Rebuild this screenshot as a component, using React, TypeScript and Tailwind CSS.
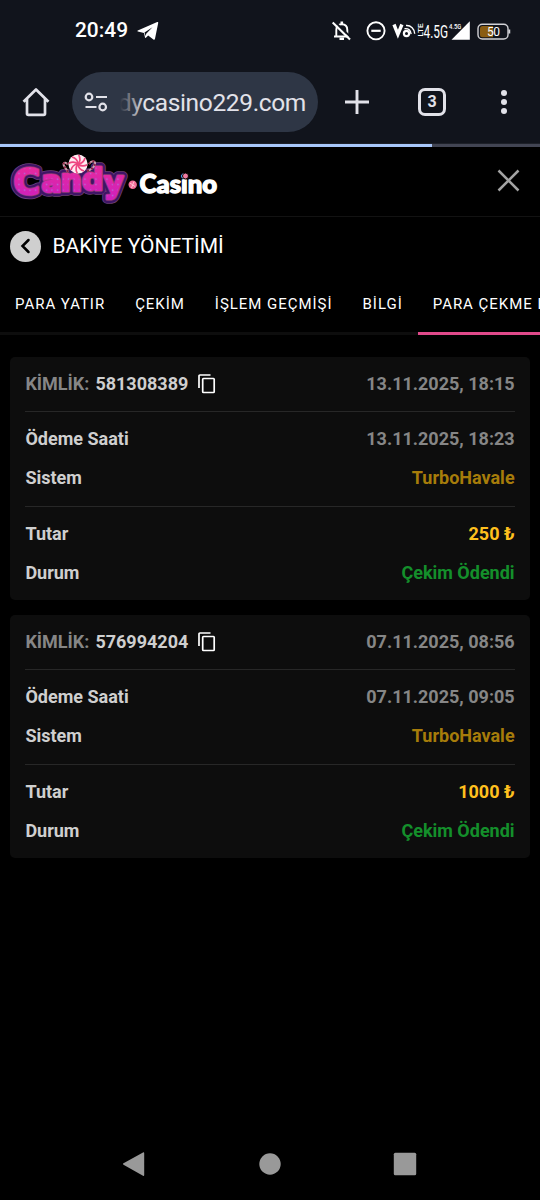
import React from "react";

type Payment = {
  id: string;
  created: string;
  paidAt: string;
  system: string;
  amount: string;
  status: string;
};

const payments: Payment[] = [
  {
    id: "581308389",
    created: "13.11.2025, 18:15",
    paidAt: "13.11.2025, 18:23",
    system: "TurboHavale",
    amount: "250 ₺",
    status: "Çekim Ödendi",
  },
  {
    id: "576994204",
    created: "07.11.2025, 08:56",
    paidAt: "07.11.2025, 09:05",
    system: "TurboHavale",
    amount: "1000 ₺",
    status: "Çekim Ödendi",
  },
];

const tabs = ["PARA YATIR", "ÇEKİM", "İŞLEM GEÇMİŞİ", "BİLGİ", "PARA ÇEKME DURUMU"];

const StatusBar = () => (
  <div className="flex h-[60px] items-center justify-between pt-px pl-[75px] pr-[29px] text-white">
    <div className="flex items-center gap-[9px]">
      <span className="text-[20.9px] font-medium leading-none">20:49</span>
      <svg width="22" height="20" viewBox="0 0 22 20" fill="white">
        <path d="M.8 9.4 20.2 1c.8-.3 1.2.1 1 .9L18 17.8c-.2 1-.9 1.2-1.6.7l-5.2-3.9-2.3 2.2c-.4.3-.8.2-.9-.3l-1-4.6L.9 10.4c-.7-.3-.7-.7-.1-1Z" />
        <path d="m7.5 11.5 8-5.2-6.3 6.5-.5 2.2Z" fill="#11141c" />
      </svg>
    </div>
    <svg width="180" height="24" viewBox="331 18.5 180 24" fill="none" stroke="white" strokeWidth="1.9">
      {/* muted bell */}
      <path d="M336.300 35.500v-6c0-3.500 2-5.700 5.500-5.700s5.500 2.200 5.500 5.700v6M334 36h15" />
      <path d="M341.800 21v2.500M339.500 38.300h4.500" strokeWidth="2.6" />
      <path d="m334 20.500 17.500 17" stroke="#11141c" strokeWidth="2" />
      <path d="m332.700 22 17.300 17" strokeWidth="2.1" />
      {/* do not disturb */}
      <circle cx="376" cy="30.3" r="8.6" />
      <path d="M371.300 30.300h9.400" strokeWidth="2.2" />
      {/* volte */}
      <path d="m394 24 3.900 9.800 4-9.800" strokeWidth="3.4" />
      <circle cx="406.5" cy="33" r="2.6" strokeWidth="2.2" />
      <path d="M404.500 28.200c4-.6 6.400 1.600 6.600 5.400M406 25c5-.4 8.500 3.400 8.700 8.200" strokeWidth="1.4" />
      <g fill="white" stroke="none" fontFamily="Roboto, sans-serif">
        <text transform="translate(423 36) rotate(-90)" fontSize="8" fontWeight="500" textLength="13" lengthAdjust="spacingAndGlyphs">LTE</text>
        <text transform="translate(423.500 37.200) scale(.64 1)" fontSize="18.5">4.5G</text>
        <text transform="translate(449 28.500) scale(.86 1)" fontSize="6.8" fontWeight="500">4.5G</text>
        <path d="M451.500 39.300h18.300V20.700Z" />
      </g>
      <rect x="478" y="23.8" width="30" height="14.7" rx="4.3" stroke="#d2d2d6" strokeWidth="1.4" />
      <path d="M480 28a2.500 2.500 0 0 1 2.500-2.500H493v11.300h-10.500A2.500 2.500 0 0 1 480 34.300Z" fill="#8a5d12" stroke="none" />
      <path d="M509.300 29v4" stroke="#d2d2d6" />
      <text x="487" y="35.5" fontSize="12" textLength="13" fill="white" stroke="none" fontFamily="Roboto, sans-serif">50</text>
    </svg>
  </div>
);

const BrowserBar = () => (
  <div className="flex h-[83px] items-start pt-3 pl-[22px] text-[#e2e2e9]">
    <div className="flex h-[60px] w-[50px] items-center">
      <svg width="28" height="30" viewBox="0 0 28 30" fill="none" stroke="currentColor" strokeWidth="2.7" strokeLinejoin="round">
        <path d="M1.500 14.800 14 2.500l12.500 12.300M5 12v14.500c0 .8.4 1.300 1.300 1.300h15.400c.9 0 1.300-.5 1.300-1.300V12" />
      </svg>
    </div>
    <div className="flex h-[60px] w-[246px] items-center rounded-full bg-[#2e3645] pl-3">
      <svg width="24" height="20" viewBox="0 0 24 20" fill="none" stroke="currentColor" strokeWidth="2.2">
        <circle cx="5" cy="5" r="3.3" />
        <path d="M12 5h11M1.500 15h11" />
        <circle cx="18.7" cy="15" r="3.3" />
      </svg>
      <div className="relative ml-3 flex w-[186px] justify-end overflow-hidden pt-px">
        <span className="whitespace-nowrap text-[24.5px] leading-[36px] tracking-[-0.35px]">dycasino229.com</span>
        <div className="absolute inset-y-0 left-0 w-6 bg-linear-to-r from-[#2e3645] to-transparent" />
      </div>
    </div>
    <div className="flex h-[60px] flex-1 items-center pl-[26px]">
      <svg width="26" height="26" viewBox="0 0 26 26" fill="none" stroke="currentColor" strokeWidth="2.9">
        <path d="M13 1v24M1 13h24" />
      </svg>
      <div className="ml-[48px] flex h-[28px] w-[28px] items-center justify-center rounded-[7px] border-[3px] border-current text-[16px] font-bold leading-none">
        3
      </div>
      <div className="ml-[55px] flex flex-col gap-[3px]">
        <span className="h-[6px] w-[6px] rounded-full bg-current" />
        <span className="h-[6px] w-[6px] rounded-full bg-current" />
        <span className="h-[6px] w-[6px] rounded-full bg-current" />
      </div>
    </div>
  </div>
);

const CandyWord = (props: React.SVGProps<SVGTextElement>) => (
  <text
    x="13.5 41.5 60.5 82 104"
    y="193.5 191.5 190.5 189.5 193"
    fontFamily="DejaVu Sans, sans-serif"
    fontWeight="700"
    fontSize="30"
    strokeLinejoin="round"
    {...props}
  >
    <tspan fontSize="36">C</tspan>andy
  </text>
);

const Logo = () => (
  <svg width="210" height="54" viewBox="10 152 210 54" fontFamily="Lato, sans-serif" fontWeight="900">
    <defs>
      <linearGradient id="candy" x1="0" y1="166" x2="0" y2="202" gradientUnits="userSpaceOnUse">
        <stop offset="0" stopColor="#e62a9c" />
        <stop offset="1" stopColor="#cc1fc0" />
      </linearGradient>
      <pattern id="bulbs" width="5.5" height="5.5" patternUnits="userSpaceOnUse">
        <circle cx="2.5" cy="3" r=".8" fill="#b070dc" />
      </pattern>
    </defs>
    <CandyWord fill="#6d4078" stroke="#6d4078" strokeWidth="9.5" />
    <CandyWord fill="#3f1466" stroke="#3f1466" strokeWidth="8" />
    <CandyWord fill="#8f3c74" stroke="#8f3c74" strokeWidth="3.6" />
    <CandyWord fill="url(#candy)" stroke="url(#candy)" strokeWidth="2" />
    <CandyWord fill="url(#bulbs)" />
    {/* candy canes and lollipop */}
    <g fill="none" strokeWidth="2">
      <path d="M68 172c-2-4-5-6-4.500-8s3-1.500 4 .5M87 171c4-1 7-4 8-7s-3-4-6 0" stroke="#c9a0ae" />
      <path d="M68 172c-2-4-5-6-4.500-8s3-1.500 4 .5M87 171c4-1 7-4 8-7s-3-4-6 0" stroke="#8f2443" strokeDasharray="2 2.5" />
    </g>
    <circle cx="78" cy="164" r="9.6" fill="#ffeaf0" />
    <g fill="none" stroke="#ee4780" strokeWidth="1.7">
      {[0, 45, 90, 135, 180, 225, 270, 315].map((a) => (
        <path key={a} d="M78 164q5.500-.5 7-6" transform={`rotate(${a} 78 164)`} />
      ))}
    </g>
    <circle cx="132.7" cy="184.8" r="4.2" fill="#f16d99" />
    <path d="m130 183 5 3.500m-1-5-2.500 6.500" stroke="#ffc2d5" />
    <g fill="white" stroke="white" strokeWidth="1.3" strokeLinejoin="round">
      <text x="139.5" y="193" fontSize="26.5" textLength="17" lengthAdjust="spacingAndGlyphs">C</text>
      <text x="156.5" y="193" fontSize="24" textLength="60.5" lengthAdjust="spacingAndGlyphs">asino</text>
    </g>
    <circle cx="185.5" cy="176" r="3" fill="#ee7ba2" stroke="black" />
  </svg>
);

const SiteHeader = () => (
  <header className="flex h-[70px] items-start justify-between border-b border-[#121212] pt-[5px] pl-[10px] pr-[20px]">
    <Logo />
    <svg className="mt-[17px]" width="23" height="23" viewBox="0 0 23 23" stroke="#a3a3a3" strokeWidth="2.5">
      <path d="m1.500 1.500 20 20m0-20-20 20" />
    </svg>
  </header>
);

const CopyIcon = () => (
  <svg className="ml-[10px]" width="18" height="20" viewBox="0 0 18 20" fill="none" stroke="white" strokeWidth="1.7">
    <path d="M1 14V2q0-1 1-1h10.500" />
    <rect x="4.7" y="4.5" width="11.5" height="14" rx=".8" />
  </svg>
);

const Row = ({ label, children }: { label: string; children: React.ReactNode }) => (
  <div className="flex h-[39px] items-center justify-between">
    <span>{label}</span>
    {children}
  </div>
);

const PaymentCard = ({ payment }: { payment: Payment }) => (
  <div className="h-[243px] rounded-[5px] bg-[#0d0d0d] px-[15px] pt-[7px] text-[18px] font-bold leading-none text-[#cfcfcf]">
    <div className="flex h-[48px] items-center justify-between border-b border-[#272727] pb-2">
      <div className="flex items-center">
        <span className="mr-[6px] text-[#868686]">KİMLİK:</span>
        <span>{payment.id}</span>
        <CopyIcon />
      </div>
      <span className="text-[#868686]">{payment.created}</span>
    </div>
    <div className="border-b border-[#272727] pt-[7.5px] pb-[8.5px]">
      <Row label="Ödeme Saati">
        <span className="text-[#868686]">{payment.paidAt}</span>
      </Row>
      <Row label="Sistem">
        <span className="text-[#a67c0a]">{payment.system}</span>
      </Row>
    </div>
    <div className="pt-[7px]">
      <Row label="Tutar">
        <span className="text-[#ffc01e]">{payment.amount}</span>
      </Row>
      <Row label="Durum">
        <span className="text-[#148f2b]">{payment.status}</span>
      </Row>
    </div>
  </div>
);

const App: React.FC = () => {
  return (
    <div className="flex h-[1200px] w-[540px] flex-col overflow-hidden bg-black font-['Roboto',sans-serif]">
      <div className="bg-[#11141c]">
        <StatusBar />
        <BrowserBar />
      </div>
      {/* page load progress */}
      <div className="h-1 border-t border-[#1d2028] bg-[#424553]">
        <div className="h-full w-[432px] bg-[#a8c7fa]" />
      </div>

      <SiteHeader />

      <div className="flex h-[58px] items-center pl-[10px]">
        <div className="flex h-[31px] w-[31px] items-center justify-center rounded-full bg-[#cfcfcf]">
          <svg width="12" height="16" viewBox="0 0 12 16" fill="none" stroke="black" strokeWidth="2.5" strokeLinecap="round">
            <path d="M8.500 2 2.500 8l6 6" />
          </svg>
        </div>
        <h1 className="ml-[11.5px] text-[21px] leading-none text-white">BAKİYE YÖNETİMİ</h1>
      </div>

      <nav className="flex h-[60px] overflow-hidden whitespace-nowrap text-[15px] tracking-[0.97px] text-white">
        {tabs.map((tab, i) => (
          <div
            key={tab}
            className={
              i === tabs.length - 1
                ? "flex shrink-0 items-center border-b-[3px] border-[#e04a8b] px-[15px] pt-[2px]"
                : "flex shrink-0 items-center border-b-[3px] border-[#0d0d0d] px-[15px] pt-[2px]"
            }
          >
            {tab}
          </div>
        ))}
      </nav>

      <main className="flex flex-1 flex-col gap-[15px] px-[10.4px] pt-[22px]">
        {payments.map((p) => (
          <PaymentCard key={p.id} payment={p} />
        ))}
      </main>

      {/* android navigation */}
      <div className="flex h-[72px] items-center justify-center">
        <svg width="296" height="26" viewBox="122 1151 296 26" fill="#999">
          <path d="M143 1152.500c.8-.4 1.200 0 1.200.7v21.800c0 .8-.5 1.100-1.200.7l-19.500-11c-.7-.4-.7-1 0-1.400Z" />
          <circle cx="270" cy="1164" r="10.7" />
          <rect x="393.8" y="1152.8" width="22.4" height="22.4" rx="1.5" />
        </svg>
      </div>
    </div>
  );
};

export default App;
